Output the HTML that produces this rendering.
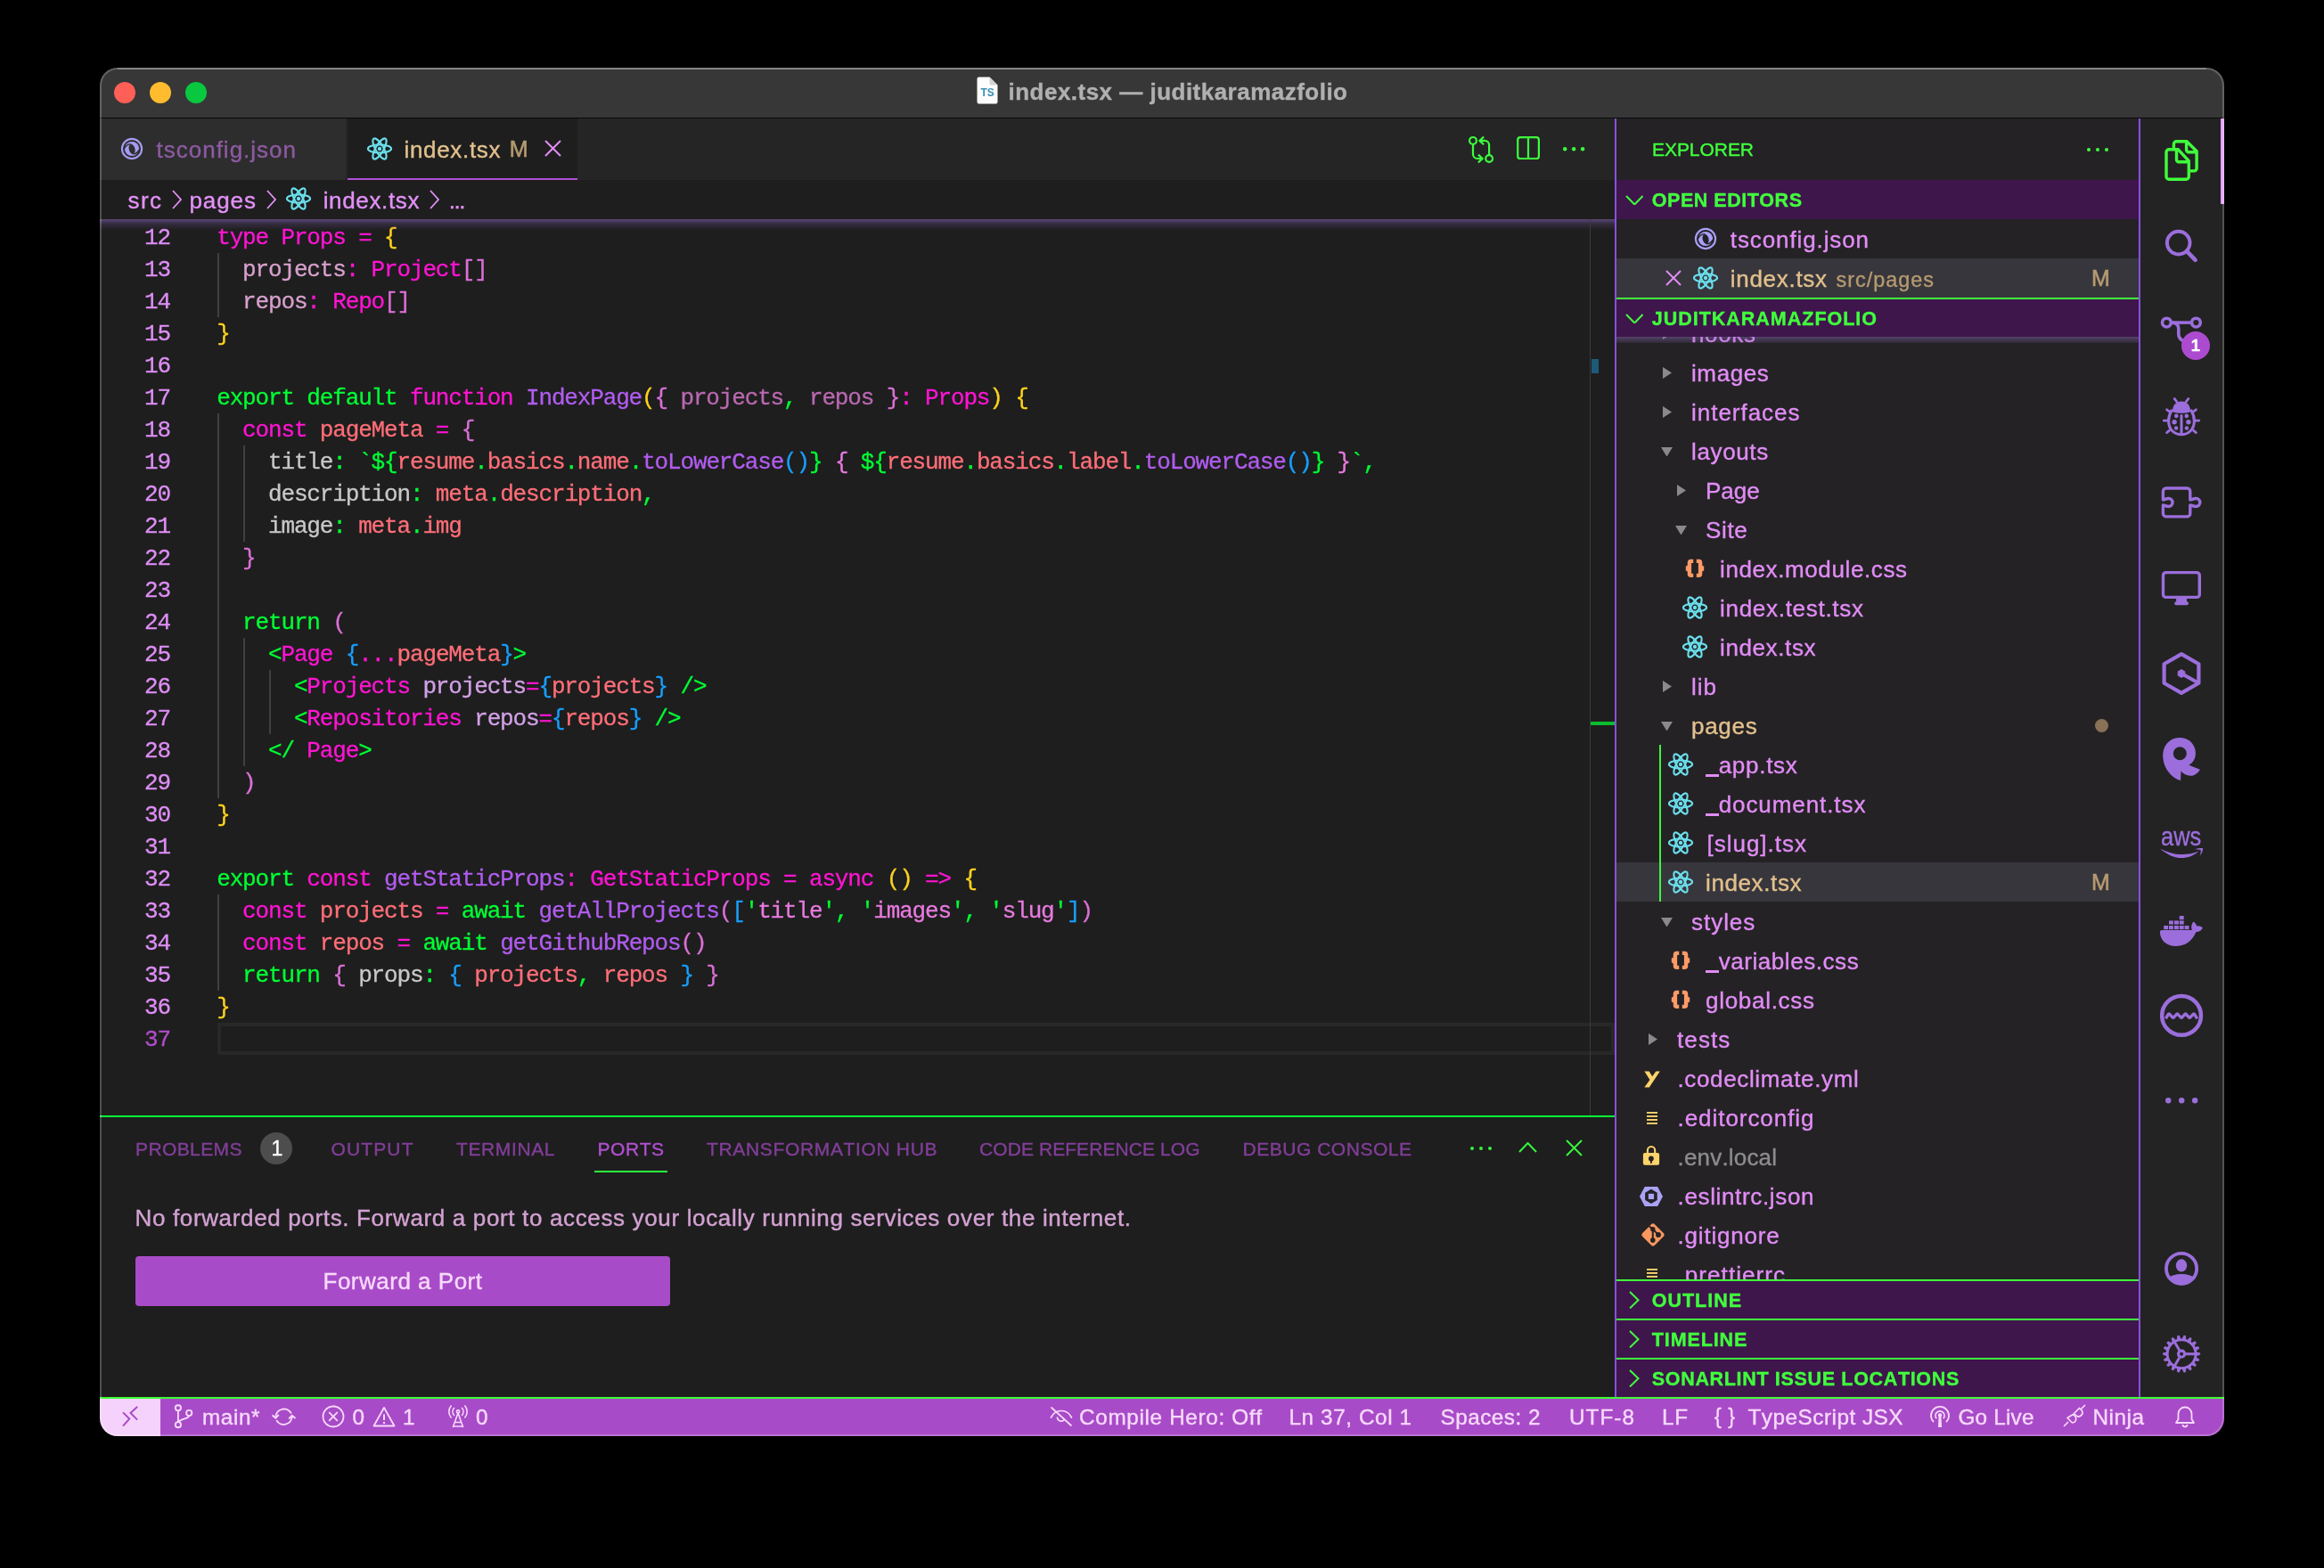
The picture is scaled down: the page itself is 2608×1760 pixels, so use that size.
<!DOCTYPE html>
<html><head><meta charset="utf-8"><title>index.tsx — juditkaramazfolio</title>
<style>
html,body{margin:0;padding:0;background:#000;width:2608px;height:1760px;}
body{position:relative;font-family:"Liberation Sans",sans-serif;font-kerning:none;-webkit-font-smoothing:antialiased;}
.a{position:absolute;display:block;}
.t{position:absolute;white-space:pre;display:block;-webkit-text-stroke:.38px;}
#win{will-change:transform;position:absolute;left:0;top:0;width:2608px;height:1760px;clip-path:inset(76px 112px 148px 112px round 20px);}

.ln{position:absolute;left:243.2px;height:36px;line-height:36px;font-family:"Liberation Mono",monospace;font-size:26px;letter-spacing:-1.152px;white-space:pre;-webkit-text-stroke:.3px;}
.no{position:absolute;left:112px;width:79.0px;text-align:right;height:36px;line-height:36px;font-family:"Liberation Mono",monospace;font-size:26px;letter-spacing:-1.152px;color:#de8ef6;-webkit-text-stroke:.3px;}
.cg{color:#00ff33}.cm{color:#ff14d2}.cp{color:#b15cf0}.cs{color:#ff6e78}.cw{color:#c8c8c8}.cy{color:#ffd21e}.co{color:#da70d6}.cb{color:#179fff}.cpa{color:#b968b0}.cat{color:#d2a0e6}.cst{color:#e87ae0}.cpr{color:#d7a0cd}
</style></head><body>
<div id="win">
<div class="a" style="left:112px;top:76px;width:2384px;height:1536px;background:#1e1e1e;"></div>
<div class="a" style="left:112px;top:76px;width:2384px;height:57px;background:#373737;"></div>
<div class="a" style="left:112px;top:132px;width:2384px;height:2px;background:#080808;"></div>
<div class="a" style="left:128px;top:92px;width:24px;height:24px;background:#fe5f57;border-radius:50%;"></div>
<div class="a" style="left:168px;top:92px;width:24px;height:24px;background:#febc2e;border-radius:50%;"></div>
<div class="a" style="left:208px;top:92px;width:24px;height:24px;background:#09c840;border-radius:50%;"></div>
<svg class="a" style="left:1096px;top:85.5px;" width="24" height="31" viewBox="0 0 24 31"><path d="M.5 2.500A2 2 0 0 1 2.500 .5H14.500L23.500 9.500V28.500A2 2 0 0 1 21.500 30.500H2.500A2 2 0 0 1 .5 28.500Z" fill="#fdfdfd"/><path d="M14.500 .5V7.500A2 2 0 0 0 16.500 9.500H23.500Z" fill="#d4d4d4"/><text x="4.600" y="22.400" font-family="Liberation Sans" font-weight="bold" font-size="12" fill="#3b8fb5" letter-spacing="-.2">TS</text></svg>
<span class="t " style="left:1131.50px;top:88.00px;font-size:26px;line-height:30px;color:#b0b0b0;font-weight:bold;letter-spacing:0.483px;">index.tsx — juditkaramazfolio</span>
<div class="a" style="left:112px;top:133px;width:1700px;height:69px;background:#252526;"></div>
<div class="a" style="left:112px;top:133px;width:276px;height:69px;background:#2d2d2d;"></div>
<div class="a" style="left:388px;top:133px;width:2px;height:69px;background:#252526;"></div>
<div class="a" style="left:390px;top:133px;width:258px;height:69px;background:#1e1e1e;"></div>
<div class="a" style="left:390px;top:199.5px;width:258px;height:2.5px;background:#b04fd6;"></div>
<svg class="a" style="left:134px;top:153px;" width="28" height="28" viewBox="0 0 28 28"><circle cx="14" cy="14" r="11.1" fill="none" stroke="#a59cf2" stroke-width="2.1"/><circle cx="14" cy="14" r="8.1" fill="#a59cf2"/><ellipse cx="14" cy="14.3" rx="3.4" ry="5.5" transform="rotate(-14 14 14)" fill="#2d2d2d"/><path d="M13.6 8.900C10.200 8.500 7.300 10.300 5.900 13.400M14.400 19.600C17.800 20 20.700 18.200 22.100 15.100" fill="none" stroke="#2d2d2d" stroke-width="1.4"/></svg>
<span class="t " style="left:175.50px;top:153.00px;font-size:26px;line-height:30px;color:#8c5aa0;letter-spacing:0.998px;">tsconfig.json</span>
<svg class="a" style="left:411.0px;top:153.0px;" width="30.0" height="28.0" viewBox="0 0 30 28"><g fill="none" stroke="#6be0ee" stroke-width="2.1"><ellipse cx="15" cy="14" rx="13.1" ry="4.5"/><ellipse cx="15" cy="14" rx="13.1" ry="4.5" transform="rotate(60 15 14)"/><ellipse cx="15" cy="14" rx="13.1" ry="4.5" transform="rotate(120 15 14)"/></g><circle cx="15" cy="14" r="2.2" fill="#6be0ee"/></svg>
<span class="t " style="left:453.50px;top:153.00px;font-size:26px;line-height:30px;color:#e2c08d;letter-spacing:0.675px;">index.tsx</span>
<span class="t " style="left:571.80px;top:153.00px;font-size:25px;line-height:28px;color:#b59a70;-webkit-text-stroke:.6px;">M</span>
<svg class="a" style="left:611.0px;top:157.0px;" width="19" height="19" viewBox="0 0 19 19"><path d="M1 1L18 18M18 1L1 18" stroke="#e08cf5" stroke-width="2.0" fill="none"/></svg>
<div class="a" style="left:112px;top:202px;width:1700px;height:44px;background:#1e1e1e;"></div>
<span class="t " style="left:143.50px;top:210.00px;font-size:26px;line-height:30px;color:#e391f7;letter-spacing:1.421px;">src</span>
<svg class="a" style="left:193.0px;top:212.5px;" width="11" height="22" viewBox="0 0 11 22"><path d="M1 1L10 11.0L1 21" stroke="#e391f7" stroke-width="1.8" fill="none" stroke-linejoin="miter"/></svg>
<span class="t " style="left:212.50px;top:210.00px;font-size:26px;line-height:30px;color:#e391f7;letter-spacing:0.915px;">pages</span>
<svg class="a" style="left:299.0px;top:212.5px;" width="11" height="22" viewBox="0 0 11 22"><path d="M1 1L10 11.0L1 21" stroke="#e391f7" stroke-width="1.8" fill="none" stroke-linejoin="miter"/></svg>
<svg class="a" style="left:320.0px;top:209.0px;" width="30.0" height="28.0" viewBox="0 0 30 28"><g fill="none" stroke="#6be0ee" stroke-width="2.1"><ellipse cx="15" cy="14" rx="13.1" ry="4.5"/><ellipse cx="15" cy="14" rx="13.1" ry="4.5" transform="rotate(60 15 14)"/><ellipse cx="15" cy="14" rx="13.1" ry="4.5" transform="rotate(120 15 14)"/></g><circle cx="15" cy="14" r="2.2" fill="#6be0ee"/></svg>
<span class="t " style="left:362.70px;top:210.00px;font-size:26px;line-height:30px;color:#e391f7;letter-spacing:0.650px;">index.tsx</span>
<svg class="a" style="left:482.0px;top:212.5px;" width="11" height="22" viewBox="0 0 11 22"><path d="M1 1L10 11.0L1 21" stroke="#e391f7" stroke-width="1.8" fill="none" stroke-linejoin="miter"/></svg>
<span class="t " style="left:503.80px;top:210.00px;font-size:26px;line-height:30px;color:#e391f7;letter-spacing:-1.485px;">...</span>
<div class="a" style="left:244px;top:1148px;width:1568px;height:36px;box-sizing:border-box;border:4px solid #282828;"></div>
<div class="a" style="left:244px;top:284px;width:2px;height:72px;background:#404040;"></div>
<div class="a" style="left:244px;top:464px;width:2px;height:432px;background:#404040;"></div>
<div class="a" style="left:273px;top:500px;width:2px;height:108px;background:#404040;"></div>
<div class="a" style="left:273px;top:716px;width:2px;height:144px;background:#404040;"></div>
<div class="a" style="left:302px;top:752px;width:2px;height:72px;background:#404040;"></div>
<div class="a" style="left:244px;top:1004px;width:2px;height:108px;background:#404040;"></div>
<div class="no" style="top:249.1px">12</div>
<div class="ln" style="top:249.1px"><span class="cm">type</span><span class="cm"> Props</span><span class="cm"> =</span><span class="cy"> {</span></div>
<div class="no" style="top:285.1px">13</div>
<div class="ln" style="top:285.1px"><span class="cpr">  projects</span><span class="cm">:</span><span class="cm"> Project</span><span class="co">[]</span></div>
<div class="no" style="top:321.1px">14</div>
<div class="ln" style="top:321.1px"><span class="cpr">  repos</span><span class="cm">:</span><span class="cm"> Repo</span><span class="co">[]</span></div>
<div class="no" style="top:357.1px">15</div>
<div class="ln" style="top:357.1px"><span class="cy">}</span></div>
<div class="no" style="top:393.1px">16</div>
<div class="no" style="top:429.1px">17</div>
<div class="ln" style="top:429.1px"><span class="cg">export default</span><span class="cm"> function</span><span class="cp"> IndexPage</span><span class="cy">(</span><span class="co">{</span><span class="cpa"> projects</span><span class="cg">,</span><span class="cpa"> repos</span><span class="co"> }</span><span class="cm">:</span><span class="cm"> Props</span><span class="cy">)</span><span class="cy"> {</span></div>
<div class="no" style="top:465.1px">18</div>
<div class="ln" style="top:465.1px"><span class="cm">  const</span><span class="cs"> pageMeta</span><span class="cm"> =</span><span class="co"> {</span></div>
<div class="no" style="top:501.1px">19</div>
<div class="ln" style="top:501.1px"><span class="cw">    title</span><span class="cg">:</span><span class="cg"> `${</span><span class="cs">resume</span><span class="cg">.</span><span class="cs">basics</span><span class="cg">.</span><span class="cs">name</span><span class="cg">.</span><span class="cp">toLowerCase</span><span class="cb">()</span><span class="cg">}</span><span class="cst"> { </span><span class="cg">${</span><span class="cs">resume</span><span class="cg">.</span><span class="cs">basics</span><span class="cg">.</span><span class="cs">label</span><span class="cg">.</span><span class="cp">toLowerCase</span><span class="cb">()</span><span class="cg">}</span><span class="cst"> }</span><span class="cg">`,</span></div>
<div class="no" style="top:537.1px">20</div>
<div class="ln" style="top:537.1px"><span class="cw">    description</span><span class="cg">:</span><span class="cs"> meta</span><span class="cg">.</span><span class="cs">description</span><span class="cg">,</span></div>
<div class="no" style="top:573.1px">21</div>
<div class="ln" style="top:573.1px"><span class="cw">    image</span><span class="cg">:</span><span class="cs"> meta</span><span class="cg">.</span><span class="cs">img</span></div>
<div class="no" style="top:609.1px">22</div>
<div class="ln" style="top:609.1px"><span class="co">  }</span></div>
<div class="no" style="top:645.1px">23</div>
<div class="no" style="top:681.1px">24</div>
<div class="ln" style="top:681.1px"><span class="cg">  return</span><span class="co"> (</span></div>
<div class="no" style="top:717.1px">25</div>
<div class="ln" style="top:717.1px"><span class="cg">    &lt;</span><span class="cm">Page</span><span class="cb"> {</span><span class="cm">...</span><span class="cs">pageMeta</span><span class="cb">}</span><span class="cg">&gt;</span></div>
<div class="no" style="top:753.1px">26</div>
<div class="ln" style="top:753.1px"><span class="cg">      &lt;</span><span class="cm">Projects</span><span class="cat"> projects</span><span class="cm">=</span><span class="cb">{</span><span class="cs">projects</span><span class="cb">}</span><span class="cg"> /&gt;</span></div>
<div class="no" style="top:789.1px">27</div>
<div class="ln" style="top:789.1px"><span class="cg">      &lt;</span><span class="cm">Repositories</span><span class="cat"> repos</span><span class="cm">=</span><span class="cb">{</span><span class="cs">repos</span><span class="cb">}</span><span class="cg"> /&gt;</span></div>
<div class="no" style="top:825.1px">28</div>
<div class="ln" style="top:825.1px"><span class="cg">    &lt;/</span><span class="cm"> Page</span><span class="cg">&gt;</span></div>
<div class="no" style="top:861.1px">29</div>
<div class="ln" style="top:861.1px"><span class="co">  )</span></div>
<div class="no" style="top:897.1px">30</div>
<div class="ln" style="top:897.1px"><span class="cy">}</span></div>
<div class="no" style="top:933.1px">31</div>
<div class="no" style="top:969.1px">32</div>
<div class="ln" style="top:969.1px"><span class="cg">export</span><span class="cm"> const</span><span class="cp"> getStaticProps</span><span class="cm">:</span><span class="cm"> GetStaticProps</span><span class="cm"> =</span><span class="cm"> async</span><span class="cy"> ()</span><span class="cm"> =&gt;</span><span class="cy"> {</span></div>
<div class="no" style="top:1005.1px">33</div>
<div class="ln" style="top:1005.1px"><span class="cm">  const</span><span class="cs"> projects</span><span class="cm"> =</span><span class="cg"> await</span><span class="cp"> getAllProjects</span><span class="co">(</span><span class="cb">[</span><span class="cg">&#x27;</span><span class="cst">title</span><span class="cg">&#x27;</span><span class="cg">,</span><span class="cg"> &#x27;</span><span class="cst">images</span><span class="cg">&#x27;</span><span class="cg">,</span><span class="cg"> &#x27;</span><span class="cst">slug</span><span class="cg">&#x27;</span><span class="cb">]</span><span class="co">)</span></div>
<div class="no" style="top:1041.1px">34</div>
<div class="ln" style="top:1041.1px"><span class="cm">  const</span><span class="cs"> repos</span><span class="cm"> =</span><span class="cg"> await</span><span class="cp"> getGithubRepos</span><span class="co">()</span></div>
<div class="no" style="top:1077.1px">35</div>
<div class="ln" style="top:1077.1px"><span class="cg">  return</span><span class="co"> {</span><span class="cw"> props</span><span class="cg">:</span><span class="cb"> {</span><span class="cs"> projects</span><span class="cg">,</span><span class="cs"> repos</span><span class="cb"> }</span><span class="co"> }</span></div>
<div class="no" style="top:1113.1px">36</div>
<div class="ln" style="top:1113.1px"><span class="cy">}</span></div>
<div class="no" style="top:1149.1px;color:#b04dca">37</div>
<div class="a" style="left:112px;top:246px;width:1700px;height:12px;background:linear-gradient(rgba(130,95,175,.6),rgba(100,75,135,.3) 45%,rgba(60,45,80,.06));"></div>
<div class="a" style="left:1784px;top:246px;width:1.3px;height:1006px;background:#3a3a3a;"></div>
<div class="a" style="left:1786px;top:403px;width:8px;height:16px;background:#1b5a78;"></div>
<div class="a" style="left:1785px;top:810px;width:27px;height:4px;background:#0bbd2f;"></div>
<div class="a" style="left:112px;top:1252px;width:1700px;height:316px;background:#1e1e1e;"></div>
<div class="a" style="left:112px;top:1252px;width:1700px;height:2px;background:#0aff36;"></div>
<span class="t " style="left:152.00px;top:1278.00px;font-size:21px;line-height:23px;color:#803e98;letter-spacing:0.400px;">PROBLEMS</span>
<div class="a" style="left:292px;top:1271px;width:36px;height:36px;background:#4d4d4d;border-radius:50%;"></div>
<span class="t " style="left:304.50px;top:1276.00px;font-size:23px;line-height:26px;color:#ffffff;">1</span>
<span class="t " style="left:371.50px;top:1278.00px;font-size:21px;line-height:23px;color:#803e98;letter-spacing:1.134px;">OUTPUT</span>
<span class="t " style="left:512.00px;top:1278.00px;font-size:21px;line-height:23px;color:#803e98;letter-spacing:0.617px;">TERMINAL</span>
<span class="t " style="left:670.50px;top:1278.00px;font-size:21px;line-height:23px;color:#b04fd0;letter-spacing:0.540px;">PORTS</span>
<div class="a" style="left:667px;top:1313.5px;width:82px;height:2.5px;background:#2aff3c;"></div>
<span class="t " style="left:793.00px;top:1278.00px;font-size:21px;line-height:23px;color:#803e98;letter-spacing:0.657px;">TRANSFORMATION HUB</span>
<span class="t " style="left:1099.00px;top:1278.00px;font-size:21px;line-height:23px;color:#803e98;letter-spacing:0.076px;">CODE REFERENCE LOG</span>
<span class="t " style="left:1394.50px;top:1278.00px;font-size:21px;line-height:23px;color:#803e98;letter-spacing:0.524px;">DEBUG CONSOLE</span>
<svg class="a" style="left:1649.0px;top:1286.0px;" width="26.0" height="6.0" viewBox="0 0 26.0 6.0"><circle cx="3.0" cy="3.0" r="2.0" fill="#35f53c"/><circle cx="13.0" cy="3.0" r="2.0" fill="#35f53c"/><circle cx="23.0" cy="3.0" r="2.0" fill="#35f53c"/></svg>
<svg class="a" style="left:1703.5px;top:1282.0px;" width="21" height="12" viewBox="0 0 21 12"><path d="M1 11L10.5 1L20 11" stroke="#35f53c" stroke-width="2.0" fill="none"/></svg>
<svg class="a" style="left:1756.5px;top:1278.5px;" width="19" height="19" viewBox="0 0 19 19"><path d="M1 1L18 18M18 1L1 18" stroke="#35f53c" stroke-width="2.0" fill="none"/></svg>
<span class="t " style="left:151.50px;top:1352.00px;font-size:26px;line-height:30px;color:#d3a1d2;letter-spacing:0.649px;">No forwarded ports. Forward a port to access your locally running services over the internet.</span>
<div class="a" style="left:152px;top:1410px;width:600px;height:56px;background:#a84bc8;border-radius:4px;"></div>
<span class="t " style="left:362.50px;top:1423.00px;font-size:26px;line-height:30px;color:#f7d9fb;letter-spacing:0.504px;">Forward a Port</span>
<div class="a" style="left:112px;top:1568px;width:2384px;height:44px;background:#a84bc8;"></div>
<div class="a" style="left:112px;top:1568px;width:2384px;height:2px;background:#3cff32;"></div>
<div class="a" style="left:112px;top:1570px;width:68px;height:42px;background:#f5d2fb;"></div>
<span class="t " style="left:227.00px;top:1577.00px;font-size:24.3px;line-height:27px;color:#f7d9fb;letter-spacing:0.593px;">main*</span>
<span class="t " style="left:395.50px;top:1577.00px;font-size:24.3px;line-height:27px;color:#f7d9fb;">0</span>
<span class="t " style="left:452.00px;top:1577.00px;font-size:24.3px;line-height:27px;color:#f7d9fb;">1</span>
<span class="t " style="left:534.00px;top:1577.00px;font-size:24.3px;line-height:27px;color:#f7d9fb;">0</span>
<span class="t " style="left:1211.00px;top:1577.00px;font-size:24.3px;line-height:27px;color:#f7d9fb;letter-spacing:0.659px;">Compile Hero: Off</span>
<span class="t " style="left:1446.50px;top:1577.00px;font-size:24.3px;line-height:27px;color:#f7d9fb;letter-spacing:0.587px;">Ln 37, Col 1</span>
<span class="t " style="left:1616.50px;top:1577.00px;font-size:24.3px;line-height:27px;color:#f7d9fb;letter-spacing:0.491px;">Spaces: 2</span>
<span class="t " style="left:1761.00px;top:1577.00px;font-size:24.3px;line-height:27px;color:#f7d9fb;letter-spacing:1.039px;">UTF-8</span>
<span class="t " style="left:1865.00px;top:1577.00px;font-size:24.3px;line-height:27px;color:#f7d9fb;letter-spacing:0.642px;">LF</span>
<span class="t " style="left:1961.50px;top:1577.00px;font-size:24.3px;line-height:27px;color:#f7d9fb;letter-spacing:0.504px;">TypeScript JSX</span>
<span class="t " style="left:2197.50px;top:1577.00px;font-size:24.3px;line-height:27px;color:#f7d9fb;letter-spacing:0.209px;">Go Live</span>
<span class="t " style="left:2348.50px;top:1577.00px;font-size:24.3px;line-height:27px;color:#f7d9fb;letter-spacing:0.531px;">Ninja</span>
<div class="a" style="left:1812px;top:133px;width:590px;height:1435px;background:#242225;"></div>
<div class="a" style="left:1812px;top:133px;width:2px;height:1435px;background:#8a4fe0;"></div>
<div class="a" style="left:2400px;top:133px;width:2px;height:1435px;background:#8a4fe0;"></div>
<span class="t " style="left:1854.00px;top:156.00px;font-size:21px;line-height:23px;color:#40ff3c;letter-spacing:-0.053px;">EXPLORER</span>
<svg class="a" style="left:2341.0px;top:164.5px;" width="26.0" height="6.0" viewBox="0 0 26.0 6.0"><circle cx="3.0" cy="3.0" r="2.0" fill="#40ff3c"/><circle cx="13.0" cy="3.0" r="2.0" fill="#40ff3c"/><circle cx="23.0" cy="3.0" r="2.0" fill="#40ff3c"/></svg>
<div class="a" style="left:1814px;top:202px;width:586px;height:44px;background:#3e164b;"></div>
<svg class="a" style="left:1823.75px;top:218.95px;" width="20.5" height="11.5" viewBox="0 0 20.5 11.5"><path d="M1 1L10.25 10.5L19.5 1" stroke="#40ff3c" stroke-width="2.0" fill="none"/></svg>
<span class="t " style="left:1853.80px;top:213.00px;font-size:21.5px;line-height:24px;color:#40ff3c;font-weight:bold;letter-spacing:0.521px;">OPEN EDITORS</span>
<svg class="a" style="left:1900px;top:254px;" width="28" height="28" viewBox="0 0 28 28"><circle cx="14" cy="14" r="11.1" fill="none" stroke="#aaa0fa" stroke-width="2.1"/><circle cx="14" cy="14" r="8.1" fill="#aaa0fa"/><ellipse cx="14" cy="14.3" rx="3.4" ry="5.5" transform="rotate(-14 14 14)" fill="#242225"/><path d="M13.6 8.900C10.200 8.500 7.300 10.300 5.900 13.400M14.400 19.600C17.800 20 20.700 18.200 22.100 15.100" fill="none" stroke="#242225" stroke-width="1.4"/></svg>
<span class="t " style="left:1941.80px;top:254.00px;font-size:26px;line-height:30px;color:#e18cf5;letter-spacing:0.890px;">tsconfig.json</span>
<div class="a" style="left:1814px;top:290px;width:586px;height:44px;background:#37363c;"></div>
<svg class="a" style="left:1869.0px;top:303.0px;" width="18" height="18" viewBox="0 0 18 18"><path d="M1 1L17 17M17 1L1 17" stroke="#e18cf5" stroke-width="2.0" fill="none"/></svg>
<svg class="a" style="left:1899.0px;top:298.0px;" width="30.0" height="28.0" viewBox="0 0 30 28"><g fill="none" stroke="#6be0ee" stroke-width="2.1"><ellipse cx="15" cy="14" rx="13.1" ry="4.5"/><ellipse cx="15" cy="14" rx="13.1" ry="4.5" transform="rotate(60 15 14)"/><ellipse cx="15" cy="14" rx="13.1" ry="4.5" transform="rotate(120 15 14)"/></g><circle cx="15" cy="14" r="2.2" fill="#6be0ee"/></svg>
<span class="t " style="left:1941.80px;top:298.00px;font-size:26px;line-height:30px;color:#e2c08d;letter-spacing:0.700px;">index.tsx</span>
<span class="t " style="left:2060.50px;top:301.00px;font-size:23.4px;line-height:26px;color:#b59a70;letter-spacing:1.006px;">src/pages</span>
<span class="t " style="left:2347.00px;top:298.00px;font-size:25px;line-height:28px;color:#b59a70;-webkit-text-stroke:.6px;">M</span>
<div class="a" style="left:1814px;top:334px;width:586px;height:2px;background:#40ff3c;"></div>
<div class="a" style="left:1814px;top:336px;width:586px;height:42px;background:#3e164b;"></div>
<svg class="a" style="left:1823.75px;top:351.95px;" width="20.5" height="11.5" viewBox="0 0 20.5 11.5"><path d="M1 1L10.25 10.5L19.5 1" stroke="#40ff3c" stroke-width="2.0" fill="none"/></svg>
<span class="t " style="left:1853.80px;top:346.00px;font-size:21.5px;line-height:24px;color:#40ff3c;font-weight:bold;letter-spacing:0.983px;">JUDITKARAMAZFOLIO</span>
<div class="a" style="left:1814px;top:378px;width:586px;height:1058px;overflow:hidden;">
<div class="a" style="left:-1814px;top:-378px;width:0;height:0;">
<span class="t " style="left:1898.00px;top:360.00px;font-size:26px;line-height:30px;color:#e18cf5;letter-spacing:0.655px;">hooks</span>
<svg class="a" style="left:1866px;top:367.5px;" width="10" height="13" viewBox="0 0 10 13"><path d="M0 0L10 6.5L0 13Z" fill="#8a8a8a"/></svg>
<span class="t " style="left:1898.00px;top:404.00px;font-size:26px;line-height:30px;color:#e18cf5;letter-spacing:0.597px;">images</span>
<svg class="a" style="left:1866px;top:411.5px;" width="10" height="13" viewBox="0 0 10 13"><path d="M0 0L10 6.5L0 13Z" fill="#8a8a8a"/></svg>
<span class="t " style="left:1898.00px;top:448.00px;font-size:26px;line-height:30px;color:#e18cf5;letter-spacing:0.975px;">interfaces</span>
<svg class="a" style="left:1866px;top:455.5px;" width="10" height="13" viewBox="0 0 10 13"><path d="M0 0L10 6.5L0 13Z" fill="#8a8a8a"/></svg>
<span class="t " style="left:1898.00px;top:492.00px;font-size:26px;line-height:30px;color:#e18cf5;letter-spacing:0.637px;">layouts</span>
<svg class="a" style="left:1863.8px;top:501.5px;" width="13" height="10.5" viewBox="0 0 13 10.5"><path d="M0 0L13 0L6.5 10.5Z" fill="#8a8a8a"/></svg>
<span class="t " style="left:1914.00px;top:536.00px;font-size:26px;line-height:30px;color:#e18cf5;letter-spacing:-0.007px;">Page</span>
<svg class="a" style="left:1882px;top:543.5px;" width="10" height="13" viewBox="0 0 10 13"><path d="M0 0L10 6.5L0 13Z" fill="#8a8a8a"/></svg>
<span class="t " style="left:1914.00px;top:580.00px;font-size:26px;line-height:30px;color:#e18cf5;letter-spacing:0.633px;">Site</span>
<svg class="a" style="left:1879.8px;top:589.5px;" width="13" height="10.5" viewBox="0 0 13 10.5"><path d="M0 0L13 0L6.5 10.5Z" fill="#8a8a8a"/></svg>
<span class="t " style="left:1930.00px;top:624.00px;font-size:26px;line-height:30px;color:#e18cf5;letter-spacing:0.608px;">index.module.css</span>
<svg class="a" style="left:1891px;top:627px;" width="22" height="22" viewBox="0 0 22 22"><path d="M9.200 .7H6.500Q2.750 .7 2.750 4.500V7Q2.750 8.500 .8 8.500V13.400Q2.750 13.400 2.750 15V17.300Q2.750 21.100 6.500 21.100H9.200V16.800H7.100V5.100H9.200Z" fill="#fd9a66"/><path d="M9.200 .7H6.500Q2.750 .7 2.750 4.500V7Q2.750 8.500 .8 8.500V13.400Q2.750 13.400 2.750 15V17.300Q2.750 21.100 6.500 21.100H9.200V16.800H7.100V5.100H9.200Z" fill="#fd9a66" transform="translate(22 0) scale(-1 1)"/></svg>
<span class="t " style="left:1930.00px;top:668.00px;font-size:26px;line-height:30px;color:#e18cf5;letter-spacing:0.713px;">index.test.tsx</span>
<svg class="a" style="left:1887.0px;top:668.0px;" width="30.0" height="28.0" viewBox="0 0 30 28"><g fill="none" stroke="#6be0ee" stroke-width="2.1"><ellipse cx="15" cy="14" rx="13.1" ry="4.5"/><ellipse cx="15" cy="14" rx="13.1" ry="4.5" transform="rotate(60 15 14)"/><ellipse cx="15" cy="14" rx="13.1" ry="4.5" transform="rotate(120 15 14)"/></g><circle cx="15" cy="14" r="2.2" fill="#6be0ee"/></svg>
<span class="t " style="left:1930.00px;top:712.00px;font-size:26px;line-height:30px;color:#e18cf5;letter-spacing:0.612px;">index.tsx</span>
<svg class="a" style="left:1887.0px;top:712.0px;" width="30.0" height="28.0" viewBox="0 0 30 28"><g fill="none" stroke="#6be0ee" stroke-width="2.1"><ellipse cx="15" cy="14" rx="13.1" ry="4.5"/><ellipse cx="15" cy="14" rx="13.1" ry="4.5" transform="rotate(60 15 14)"/><ellipse cx="15" cy="14" rx="13.1" ry="4.5" transform="rotate(120 15 14)"/></g><circle cx="15" cy="14" r="2.2" fill="#6be0ee"/></svg>
<span class="t " style="left:1898.00px;top:756.00px;font-size:26px;line-height:30px;color:#e18cf5;letter-spacing:0.994px;">lib</span>
<svg class="a" style="left:1866px;top:763.5px;" width="10" height="13" viewBox="0 0 10 13"><path d="M0 0L10 6.5L0 13Z" fill="#8a8a8a"/></svg>
<span class="t " style="left:1898.00px;top:800.00px;font-size:26px;line-height:30px;color:#e2c08d;letter-spacing:0.715px;">pages</span>
<svg class="a" style="left:1863.8px;top:809.5px;" width="13" height="10.5" viewBox="0 0 13 10.5"><path d="M0 0L13 0L6.5 10.5Z" fill="#8a8a8a"/></svg>
<div class="a" style="left:1914.2px;top:869px;width:15px;height:2.8px;background:#e18cf5;"></div>
<span class="t " style="left:1928.70px;top:844.00px;font-size:26px;line-height:30px;color:#e18cf5;letter-spacing:0.712px;">app.tsx</span>
<svg class="a" style="left:1871.0px;top:844.0px;" width="30.0" height="28.0" viewBox="0 0 30 28"><g fill="none" stroke="#6be0ee" stroke-width="2.1"><ellipse cx="15" cy="14" rx="13.1" ry="4.5"/><ellipse cx="15" cy="14" rx="13.1" ry="4.5" transform="rotate(60 15 14)"/><ellipse cx="15" cy="14" rx="13.1" ry="4.5" transform="rotate(120 15 14)"/></g><circle cx="15" cy="14" r="2.2" fill="#6be0ee"/></svg>
<div class="a" style="left:1914.2px;top:913px;width:15px;height:2.8px;background:#e18cf5;"></div>
<span class="t " style="left:1928.70px;top:888.00px;font-size:26px;line-height:30px;color:#e18cf5;letter-spacing:0.916px;">document.tsx</span>
<svg class="a" style="left:1871.0px;top:888.0px;" width="30.0" height="28.0" viewBox="0 0 30 28"><g fill="none" stroke="#6be0ee" stroke-width="2.1"><ellipse cx="15" cy="14" rx="13.1" ry="4.5"/><ellipse cx="15" cy="14" rx="13.1" ry="4.5" transform="rotate(60 15 14)"/><ellipse cx="15" cy="14" rx="13.1" ry="4.5" transform="rotate(120 15 14)"/></g><circle cx="15" cy="14" r="2.2" fill="#6be0ee"/></svg>
<span class="t " style="left:1915.50px;top:932.00px;font-size:26px;line-height:30px;color:#e18cf5;letter-spacing:0.990px;">[slug].tsx</span>
<svg class="a" style="left:1871.0px;top:932.0px;" width="30.0" height="28.0" viewBox="0 0 30 28"><g fill="none" stroke="#6be0ee" stroke-width="2.1"><ellipse cx="15" cy="14" rx="13.1" ry="4.5"/><ellipse cx="15" cy="14" rx="13.1" ry="4.5" transform="rotate(60 15 14)"/><ellipse cx="15" cy="14" rx="13.1" ry="4.5" transform="rotate(120 15 14)"/></g><circle cx="15" cy="14" r="2.2" fill="#6be0ee"/></svg>
<div class="a" style="left:1814px;top:968px;width:586px;height:44px;background:#37363c;"></div>
<span class="t " style="left:2347.00px;top:976.00px;font-size:25px;line-height:28px;color:#b59a70;-webkit-text-stroke:.6px;">M</span>
<span class="t " style="left:1914.00px;top:976.00px;font-size:26px;line-height:30px;color:#e2c08d;letter-spacing:0.612px;">index.tsx</span>
<svg class="a" style="left:1871.0px;top:976.0px;" width="30.0" height="28.0" viewBox="0 0 30 28"><g fill="none" stroke="#6be0ee" stroke-width="2.1"><ellipse cx="15" cy="14" rx="13.1" ry="4.5"/><ellipse cx="15" cy="14" rx="13.1" ry="4.5" transform="rotate(60 15 14)"/><ellipse cx="15" cy="14" rx="13.1" ry="4.5" transform="rotate(120 15 14)"/></g><circle cx="15" cy="14" r="2.2" fill="#6be0ee"/></svg>
<span class="t " style="left:1898.00px;top:1020.00px;font-size:26px;line-height:30px;color:#e18cf5;letter-spacing:0.968px;">styles</span>
<svg class="a" style="left:1863.8px;top:1029.5px;" width="13" height="10.5" viewBox="0 0 13 10.5"><path d="M0 0L13 0L6.5 10.5Z" fill="#8a8a8a"/></svg>
<div class="a" style="left:1914.2px;top:1089px;width:15px;height:2.8px;background:#e18cf5;"></div>
<span class="t " style="left:1928.70px;top:1064.00px;font-size:26px;line-height:30px;color:#e18cf5;letter-spacing:0.560px;">variables.css</span>
<svg class="a" style="left:1875px;top:1067px;" width="22" height="22" viewBox="0 0 22 22"><path d="M9.200 .7H6.500Q2.750 .7 2.750 4.500V7Q2.750 8.500 .8 8.500V13.400Q2.750 13.400 2.750 15V17.300Q2.750 21.100 6.500 21.100H9.200V16.800H7.100V5.100H9.200Z" fill="#fd9a66"/><path d="M9.200 .7H6.500Q2.750 .7 2.750 4.500V7Q2.750 8.500 .8 8.500V13.400Q2.750 13.400 2.750 15V17.300Q2.750 21.100 6.500 21.100H9.200V16.800H7.100V5.100H9.200Z" fill="#fd9a66" transform="translate(22 0) scale(-1 1)"/></svg>
<span class="t " style="left:1914.00px;top:1108.00px;font-size:26px;line-height:30px;color:#e18cf5;letter-spacing:0.709px;">global.css</span>
<svg class="a" style="left:1875px;top:1111px;" width="22" height="22" viewBox="0 0 22 22"><path d="M9.200 .7H6.500Q2.750 .7 2.750 4.500V7Q2.750 8.500 .8 8.500V13.400Q2.750 13.400 2.750 15V17.300Q2.750 21.100 6.500 21.100H9.200V16.800H7.100V5.100H9.200Z" fill="#fd9a66"/><path d="M9.200 .7H6.500Q2.750 .7 2.750 4.500V7Q2.750 8.500 .8 8.500V13.400Q2.750 13.400 2.750 15V17.300Q2.750 21.100 6.500 21.100H9.200V16.800H7.100V5.100H9.200Z" fill="#fd9a66" transform="translate(22 0) scale(-1 1)"/></svg>
<span class="t " style="left:1882.00px;top:1152.00px;font-size:26px;line-height:30px;color:#e18cf5;letter-spacing:1.098px;">tests</span>
<svg class="a" style="left:1850px;top:1159.5px;" width="10" height="13" viewBox="0 0 10 13"><path d="M0 0L10 6.5L0 13Z" fill="#8a8a8a"/></svg>
<span class="t " style="left:1882.50px;top:1196.00px;font-size:26px;line-height:30px;color:#e18cf5;letter-spacing:0.639px;">.codeclimate.yml</span>
<svg class="a" style="left:1845px;top:1201.6px;" width="19" height="19" viewBox="0 0 19 19"><path d="M13.300 .4H17.800L5.800 18.400H.4Z" fill="#fdd36b"/><path d="M.4 .4H5.600L10.600 8.600L8 12.600Z" fill="#fdd36b"/></svg>
<span class="t " style="left:1882.50px;top:1240.00px;font-size:26px;line-height:30px;color:#e18cf5;letter-spacing:0.947px;">.editorconfig</span>
<svg class="a" style="left:1847.8px;top:1248px;" width="12.4" height="16" viewBox="0 0 12.4 16"><rect x="0" y="0" width="12.200" height="1.900" fill="#fdd36b"/><rect x="0" y="4" width="12.200" height="1.900" fill="#fdd36b"/><rect x="0" y="8" width="12.200" height="1.900" fill="#fdd36b"/><rect x="0" y="12" width="12.200" height="1.900" fill="#fdd36b"/></svg>
<span class="t " style="left:1882.50px;top:1284.00px;font-size:26px;line-height:30px;color:#8c8c8c;letter-spacing:0.184px;">.env.local</span>
<svg class="a" style="left:1843px;top:1285px;" width="20" height="24" viewBox="0 0 20 24"><path d="M5.900 10V6.200a4.150 4.150 0 0 1 8.300 0V10" fill="none" stroke="#fdd36b" stroke-width="2.100"/><rect x=".9" y="9" width="18.200" height="13.800" rx="2" fill="#fdd36b"/><circle cx="9.900" cy="15.400" r="2.900" fill="#242225"/><rect x="8.900" y="16" width="2" height="4.700" fill="#242225"/></svg>
<span class="t " style="left:1882.50px;top:1328.00px;font-size:26px;line-height:30px;color:#e18cf5;letter-spacing:0.654px;">.eslintrc.json</span>
<svg class="a" style="left:1839px;top:1330px;" width="28" height="24" viewBox="0 0 28 24"><g transform="translate(13.950 12.950)"><path d="M-13 0L-7.200 -11H7.200L13 0L7.200 11H-7.200Z" fill="#aaa2f5"/><path d="M0 -8.100L6.800 -4.100V4.100L0 8.100L-6.800 4.100V-4.100Z" fill="#242225"/><rect x="-3.100" y="-3.100" width="6.200" height="6.200" fill="#aaa2f5"/></g></svg>
<span class="t " style="left:1882.50px;top:1372.00px;font-size:26px;line-height:30px;color:#e18cf5;letter-spacing:0.816px;">.gitignore</span>
<svg class="a" style="left:1841px;top:1372px;" width="28" height="28" viewBox="0 0 28 28"><g transform="translate(14 14)"><rect x="-8.900" y="-8.900" width="17.800" height="17.800" rx="2" transform="rotate(45)" fill="#f8975f" stroke="#f8975f" stroke-width="1.500" stroke-linejoin="round"/><g stroke="#242225" stroke-width="2" fill="#242225"><path d="M-4.200 -9.500L-.2 -6.300V6.100M-.2 -6.300L6 -.1" fill="none"/><circle cx="-.2" cy="-6.300" r="1.700"/><circle cx="6" cy="-.1" r="2"/><circle cx="-.2" cy="6.100" r="1.800"/></g></g></svg>
<span class="t " style="left:1882.50px;top:1416.00px;font-size:26px;line-height:30px;color:#e18cf5;letter-spacing:1.070px;">.prettierrc</span>
<svg class="a" style="left:1847.8px;top:1424px;" width="12.4" height="16" viewBox="0 0 12.4 16"><rect x="0" y="0" width="12.200" height="1.900" fill="#fdd36b"/><rect x="0" y="4" width="12.200" height="1.900" fill="#fdd36b"/><rect x="0" y="8" width="12.200" height="1.900" fill="#fdd36b"/><rect x="0" y="12" width="12.200" height="1.900" fill="#fdd36b"/></svg>
<div class="a" style="left:2350.5px;top:806.5px;width:15px;height:15px;background:#8a7156;border-radius:50%;"></div>
<div class="a" style="left:1862px;top:836px;width:2px;height:176px;background:#3df53c;"></div>
</div></div>
<div class="a" style="left:1814px;top:378px;width:586px;height:6.5px;background:linear-gradient(rgba(150,110,200,.42),rgba(110,85,150,.16));"></div>
<div class="a" style="left:1814px;top:1436px;width:586px;height:2px;background:#40ff3c;"></div>
<div class="a" style="left:1814px;top:1438px;width:586px;height:42px;background:#3e164b;"></div>
<svg class="a" style="left:1828.45px;top:1448.75px;" width="11.5" height="20.5" viewBox="0 0 11.5 20.5"><path d="M1 1L10.5 10.25L1 19.5" stroke="#40ff3c" stroke-width="2.0" fill="none" stroke-linejoin="miter"/></svg>
<span class="t " style="left:1853.80px;top:1448.00px;font-size:21.5px;line-height:24px;color:#40ff3c;font-weight:bold;letter-spacing:0.974px;">OUTLINE</span>
<div class="a" style="left:1814px;top:1480px;width:586px;height:2px;background:#40ff3c;"></div>
<div class="a" style="left:1814px;top:1482px;width:586px;height:42px;background:#3e164b;"></div>
<svg class="a" style="left:1828.45px;top:1492.75px;" width="11.5" height="20.5" viewBox="0 0 11.5 20.5"><path d="M1 1L10.5 10.25L1 19.5" stroke="#40ff3c" stroke-width="2.0" fill="none" stroke-linejoin="miter"/></svg>
<span class="t " style="left:1853.80px;top:1492.00px;font-size:21.5px;line-height:24px;color:#40ff3c;font-weight:bold;letter-spacing:0.881px;">TIMELINE</span>
<div class="a" style="left:1814px;top:1524px;width:586px;height:2px;background:#40ff3c;"></div>
<div class="a" style="left:1814px;top:1526px;width:586px;height:42px;background:#3e164b;"></div>
<svg class="a" style="left:1828.45px;top:1536.75px;" width="11.5" height="20.5" viewBox="0 0 11.5 20.5"><path d="M1 1L10.5 10.25L1 19.5" stroke="#40ff3c" stroke-width="2.0" fill="none" stroke-linejoin="miter"/></svg>
<span class="t " style="left:1853.80px;top:1536.00px;font-size:21.5px;line-height:24px;color:#40ff3c;font-weight:bold;letter-spacing:0.667px;">SONARLINT ISSUE LOCATIONS</span>
<div class="a" style="left:2402px;top:133px;width:94px;height:1435px;background:#232323;"></div>
<div class="a" style="left:2492px;top:133px;width:4px;height:96px;background:#e5a0ff;"></div>
<svg class="a" style="left:2418px;top:150px;" width="60" height="60" viewBox="0 0 60 60"><g fill="none" stroke="#40ff3c" stroke-width="3.4" stroke-linejoin="round"><path d="M16 17.800H26.400L38.300 30.600V48.300a3 3 0 0 1-3 3H16a3 3 0 0 1-3-3V20.800a3 3 0 0 1 3-3Z"/><path d="M24.500 17.800V29.300a2.500 2.500 0 0 0 2.500 2.500H38.300"/><path d="M21.400 17.800V11.800a3 3 0 0 1 3-3H36L47.100 19.700V38.900a3 3 0 0 1-3 3H38.300"/><path d="M35.600 8.800V18.200a2.500 2.500 0 0 0 2.500 2.500H47.100"/></g></svg>
<svg class="a" style="left:2418px;top:246px;" width="60" height="60" viewBox="0 0 60 60"><g fill="none" stroke="#9b6edc"><circle cx="26.700" cy="26.600" r="12.800" stroke-width="4"/><path d="M36.200 36.200L45.600 45.800" stroke-width="4.600" stroke-linecap="round"/></g></svg>
<svg class="a" style="left:2418px;top:342px;" width="70" height="70" viewBox="0 0 70 70"><g fill="none" stroke="#9b6edc" stroke-width="3.600"><circle cx="13.400" cy="20.100" r="4.900"/><circle cx="46.400" cy="20.100" r="4.900"/><path d="M18.300 20.100H41.500"/><path d="M20 20.100C24.500 20.300 26.800 23 26.800 27V33C26.800 37 29 39.200 32.500 40.800"/></g></svg>
<div class="a" style="left:2448px;top:372px;width:32px;height:32px;background:#ac4bcf;border-radius:50%;"></div>
<span class="t " style="left:2458.80px;top:377.00px;font-size:18.5px;line-height:21px;color:#ffffff;font-weight:bold;">1</span>
<svg class="a" style="left:2418px;top:438px;" width="60" height="60" viewBox="0 0 60 60"><g fill="none" stroke="#9b6edc" stroke-linecap="round"><path d="M18.800 23C16.500 27 15.500 31 15.600 35C15.800 44 22 49.800 30 49.800C38 49.800 44.200 44 44.400 35C44.500 31 43.500 27 41.200 23" stroke-width="3.100"/><path d="M30 28.500V48" stroke-width="3"/><g stroke-width="2.800"><path d="M24.900 13L22.200 9.600M35.100 13L37.800 9.600"/><path d="M17.200 24.500L13.600 21.800M42.800 24.500L46.400 21.800M14.500 34.100H10.200M45.500 34.100H49.800M16.500 45.200L13.600 47.600M43.500 45.200L46.400 47.600"/></g></g><path d="M19.900 24.200C19.900 17 24 12.600 30 12.600C36 12.600 40.100 17 40.100 24.200C37 25.300 33.500 25.700 30 25.700C26.500 25.700 23 25.300 19.900 24.200Z" fill="#9b6edc"/><g fill="#9b6edc"><circle cx="24.300" cy="28.900" r="2.300"/><circle cx="35.800" cy="28.900" r="2.300"/><circle cx="22.100" cy="35.800" r="2.700"/><circle cx="37.900" cy="35.800" r="2.700"/><circle cx="24.100" cy="42.500" r="2.200"/><circle cx="35.900" cy="42.500" r="2.200"/></g></svg>
<svg class="a" style="left:2418px;top:534px;" width="60" height="60" viewBox="0 0 60 60"><path d="M9.400 27V17.500a3.500 3.500 0 0 1 3.500-3.500H36.300a3.500 3.500 0 0 1 3.500 3.500V27C42 27 43 25.500 46.300 25.500A4.500 4.500 0 0 1 46.300 34.500C43 34.500 42 33 39.800 33V42.400a3.500 3.500 0 0 1-3.500 3.500H12.900a3.500 3.500 0 0 1-3.500-3.500V33C11.600 33 12.200 34.500 15.500 34.500A4.500 4.500 0 0 0 15.500 25.500C12.200 25.500 11.600 27 9.400 27Z" fill="none" stroke="#9b6edc" stroke-width="3.400" stroke-linejoin="round"/></svg>
<svg class="a" style="left:2418px;top:630px;" width="60" height="60" viewBox="0 0 60 60"><rect x="9.500" y="12.600" width="40.800" height="27.800" rx="3.200" fill="none" stroke="#9b6edc" stroke-width="3.400"/><path d="M24.100 41H36V45.200C37.500 45.300 38 46 38 47.200S37 49.200 36 49.200H24.200C23 49.200 22.200 48.400 22.200 47.200S23 45.300 24.100 45.200Z" fill="#9b6edc"/></svg>
<svg class="a" style="left:2418px;top:726px;" width="60" height="60" viewBox="0 0 60 60"><path d="M30 8.100L49.400 19.200V40.800L30 51.900L10.600 40.800V19.200Z" fill="none" stroke="#9b6edc" stroke-width="4.200" stroke-linejoin="round"/><path d="M30 25.600L33.800 27.800V32.200L30 34.400L26.200 32.200V27.800Z" fill="#9b6edc" stroke="#9b6edc" stroke-width="1" stroke-linejoin="round"/><path d="M30 30L48.500 40.200" stroke="#9b6edc" stroke-width="4"/></svg>
<svg class="a" style="left:2418px;top:822px;" width="60" height="60" viewBox="0 0 60 60"><path fill-rule="evenodd" d="M28.300 5.900C38.500 5.900 45.900 13.500 45.900 23.700C45.900 29.500 43 34 38.300 36.700L50.900 41.700C48 46.500 44.500 48.800 40.200 48.800C35.500 48.800 32 46.500 29.500 43.600L29.100 54C19 51.500 9.200 40 9.200 26C9.200 14 17.500 5.900 28.300 5.900ZM28.300 16.200A7.500 7.500 0 1 0 28.300 31.200A7.500 7.500 0 1 0 28.300 16.200Z" fill="#9b6edc"/></svg>
<span class="t " style="left:2424.60px;top:922.00px;font-size:29.5px;line-height:33px;color:#9b6edc;transform:scaleX(.862);transform-origin:0 0;">aws</span>
<svg class="a" style="left:2413px;top:918px;" width="70" height="70" viewBox="0 0 70 70"><path d="M10.900 34.400C20 42 28 45 34.800 45C42 45 49 42.500 54.500 37.500C49 40 42 41 34.800 41C27 41 19 38.500 10.900 34.400Z" fill="#9b6edc"/><path d="M50 35.300C53 34.200 56 33.800 59.200 34.200C59 37.500 57.500 40.500 55.400 42.900C56.300 40.500 57 38.500 56.800 36.200C54.500 35.500 52 35.600 50 35.300Z" fill="#9b6edc"/></svg>
<svg class="a" style="left:2413px;top:1010px;" width="70" height="70" viewBox="0 0 70 70"><g fill="#9b6edc"><rect x="15.2" y="29" width="4.900" height="4.200"/><rect x="21" y="29" width="4.900" height="4.200"/><rect x="27" y="29" width="4.900" height="4.200"/><rect x="32.8" y="29" width="4.900" height="4.200"/><rect x="38.6" y="29" width="4.900" height="4.200"/><rect x="21" y="23.4" width="4.900" height="4.200"/><rect x="27" y="23.4" width="4.900" height="4.200"/><rect x="32.8" y="23.4" width="4.900" height="4.200"/><rect x="32.8" y="18" width="4.900" height="4.200"/><path d="M10.900 36Q10.900 33.900 13 33.900H46.900C45.500 31 46.500 27 48.400 24.600C50.500 25.800 51.800 27.500 52 29.500C54.500 29 57 29.800 58.900 31.500C57.500 34.500 54.500 36 51.300 36.200C47 47 38 52 28.600 52C18 52 10.900 45 10.900 36Z"/></g></svg>
<svg class="a" style="left:2413px;top:1105px;" width="70" height="70" viewBox="0 0 70 70"><circle cx="35.050" cy="34.900" r="21.900" fill="none" stroke="#9b6edc" stroke-width="4.500"/><path d="M17.400 38.400L20 33.800Q21 32.300 22 33.800L24.700 36.600Q25.700 37.800 26.700 36.600L29.400 33.800Q30.400 32.300 31.400 33.800L34 36.600Q35 37.800 36 36.600L38.500 33.800Q39.500 32.300 40.500 33.800L43.200 36.600Q44.200 37.800 45.200 36.600L47.900 33.800Q48.900 32.300 49.900 33.800L52.700 38.400" fill="none" stroke="#9b6edc" stroke-width="3.400" stroke-linejoin="round"/></svg>
<svg class="a" style="left:2428.8px;top:1231.3999999999999px;" width="38.4" height="8.4" viewBox="0 0 38.4 8.4"><circle cx="4.2" cy="4.2" r="3.2" fill="#9b6edc"/><circle cx="19.2" cy="4.2" r="3.2" fill="#9b6edc"/><circle cx="34.2" cy="4.2" r="3.2" fill="#9b6edc"/></svg>
<svg class="a" style="left:2413px;top:1390px;" width="70" height="70" viewBox="0 0 70 70"><defs><clipPath id="acl"><circle cx="35.050" cy="33.900" r="17.500"/></clipPath></defs><circle cx="35.050" cy="33.900" r="17.100" fill="none" stroke="#9b6edc" stroke-width="3.800"/><ellipse cx="35" cy="30.400" rx="6.200" ry="7.100" fill="#9b6edc"/><path d="M15 60V47C21 42.500 28 40 35 40C42 40 49 42.500 55 47V60Z" fill="#9b6edc" clip-path="url(#acl)"/></svg>
<svg class="a" style="left:2413px;top:1485px;" width="70" height="70" viewBox="0 0 70 70"><path d="M33.100 18.600L34.200 14.100H36L37.100 18.600Z" fill="#9b6edc" stroke="#9b6edc" stroke-width=".8" stroke-linejoin="round" transform="rotate(10 35.100 34.700)"/><path d="M33.100 18.600L34.200 14.100H36L37.100 18.600Z" fill="#9b6edc" stroke="#9b6edc" stroke-width=".8" stroke-linejoin="round" transform="rotate(30 35.100 34.700)"/><path d="M33.100 18.600L34.200 14.100H36L37.100 18.600Z" fill="#9b6edc" stroke="#9b6edc" stroke-width=".8" stroke-linejoin="round" transform="rotate(50 35.100 34.700)"/><path d="M33.100 18.600L34.200 14.100H36L37.100 18.600Z" fill="#9b6edc" stroke="#9b6edc" stroke-width=".8" stroke-linejoin="round" transform="rotate(70 35.100 34.700)"/><path d="M33.100 18.600L34.200 14.100H36L37.100 18.600Z" fill="#9b6edc" stroke="#9b6edc" stroke-width=".8" stroke-linejoin="round" transform="rotate(90 35.100 34.700)"/><path d="M33.100 18.600L34.200 14.100H36L37.100 18.600Z" fill="#9b6edc" stroke="#9b6edc" stroke-width=".8" stroke-linejoin="round" transform="rotate(110 35.100 34.700)"/><path d="M33.100 18.600L34.200 14.100H36L37.100 18.600Z" fill="#9b6edc" stroke="#9b6edc" stroke-width=".8" stroke-linejoin="round" transform="rotate(130 35.100 34.700)"/><path d="M33.100 18.600L34.200 14.100H36L37.100 18.600Z" fill="#9b6edc" stroke="#9b6edc" stroke-width=".8" stroke-linejoin="round" transform="rotate(150 35.100 34.700)"/><path d="M33.100 18.600L34.200 14.100H36L37.100 18.600Z" fill="#9b6edc" stroke="#9b6edc" stroke-width=".8" stroke-linejoin="round" transform="rotate(170 35.100 34.700)"/><path d="M33.100 18.600L34.200 14.100H36L37.100 18.600Z" fill="#9b6edc" stroke="#9b6edc" stroke-width=".8" stroke-linejoin="round" transform="rotate(190 35.100 34.700)"/><path d="M33.100 18.600L34.200 14.100H36L37.100 18.600Z" fill="#9b6edc" stroke="#9b6edc" stroke-width=".8" stroke-linejoin="round" transform="rotate(210 35.100 34.700)"/><path d="M33.100 18.600L34.200 14.100H36L37.100 18.600Z" fill="#9b6edc" stroke="#9b6edc" stroke-width=".8" stroke-linejoin="round" transform="rotate(230 35.100 34.700)"/><path d="M33.100 18.600L34.200 14.100H36L37.100 18.600Z" fill="#9b6edc" stroke="#9b6edc" stroke-width=".8" stroke-linejoin="round" transform="rotate(250 35.100 34.700)"/><path d="M33.100 18.600L34.200 14.100H36L37.100 18.600Z" fill="#9b6edc" stroke="#9b6edc" stroke-width=".8" stroke-linejoin="round" transform="rotate(270 35.100 34.700)"/><path d="M33.100 18.600L34.200 14.100H36L37.100 18.600Z" fill="#9b6edc" stroke="#9b6edc" stroke-width=".8" stroke-linejoin="round" transform="rotate(290 35.100 34.700)"/><path d="M33.100 18.600L34.200 14.100H36L37.100 18.600Z" fill="#9b6edc" stroke="#9b6edc" stroke-width=".8" stroke-linejoin="round" transform="rotate(310 35.100 34.700)"/><path d="M33.100 18.600L34.200 14.100H36L37.100 18.600Z" fill="#9b6edc" stroke="#9b6edc" stroke-width=".8" stroke-linejoin="round" transform="rotate(330 35.100 34.700)"/><path d="M33.100 18.600L34.200 14.100H36L37.100 18.600Z" fill="#9b6edc" stroke="#9b6edc" stroke-width=".8" stroke-linejoin="round" transform="rotate(350 35.100 34.700)"/><g fill="none" stroke="#9b6edc"><circle cx="35.100" cy="34.700" r="15.900" stroke-width="2.800"/><circle cx="35.100" cy="34.700" r="3.550" stroke-width="3.100"/><path d="M39.500 34.700H50.500M32.800 30.700L27.300 21.200M32.800 38.700L27.300 48.200" stroke-width="2.900"/></g></svg>
<svg class="a" style="left:1646px;top:151px;" width="32" height="34" viewBox="0 0 32 34"><g fill="none" stroke="#3cff3c" stroke-width="2.200"><circle cx="7" cy="6.900" r="3.900"/><circle cx="25.100" cy="27" r="3.900"/><path d="M7 10.800V22a5 5 0 0 0 5 5H17.400M12.900 22.600L17.600 27L12.900 31.400"/><path d="M25.100 23.100V11.900a5 5 0 0 0-5-5H14.600M19.100 2.500L14.400 6.900L19.100 11.300"/></g></svg>
<svg class="a" style="left:1701px;top:152px;" width="28" height="28" viewBox="0 0 28 28"><g fill="none" stroke="#3cff3c" stroke-width="2.200"><rect x="2.200" y="2.100" width="23.700" height="23.900" rx="2.800"/><path d="M14 2.100V26"/></g></svg>
<svg class="a" style="left:1752.75px;top:163.9px;" width="26.299999999999997" height="6.4" viewBox="0 0 26.299999999999997 6.4"><circle cx="3.2" cy="3.2" r="2.2" fill="#3cff3c"/><circle cx="13.149999999999999" cy="3.2" r="2.2" fill="#3cff3c"/><circle cx="23.099999999999998" cy="3.2" r="2.2" fill="#3cff3c"/></svg>
<svg class="a" style="left:134px;top:1576px;" width="26" height="30" viewBox="0 0 26 30"><path d="M4 9.400L11.200 16.600L4 24.600M20.100 3L12.500 10L20.100 17.600" fill="none" stroke="#a849c9" stroke-width="2"/></svg>
<svg class="a" style="left:194px;top:1575px;" width="24" height="32" viewBox="0 0 24 32"><g fill="none" stroke="#f7d9fb" stroke-width="1.900"><circle cx="5.900" cy="5.300" r="3.100"/><circle cx="5.900" cy="24.200" r="3.100"/><circle cx="18.200" cy="11" r="3.100"/><path d="M5.900 8.400V21.100M18.200 14.100C18.200 18 10 16.500 6.500 20.800"/></g></svg>
<svg class="a" style="left:303px;top:1577px;" width="32" height="28" viewBox="0 0 32 28"><g fill="none" stroke="#f7d9fb" stroke-width="1.900"><path d="M6.300 13.500A9.300 9.300 0 0 1 23.800 9.500M24.700 13A9.300 9.300 0 0 1 7.200 17"/><path d="M2.500 11.500L6.300 14.800L9.800 11M28.500 15L24.700 11.700L21.200 15.500"/></g></svg>
<svg class="a" style="left:361px;top:1577px;" width="26" height="26" viewBox="0 0 26 26"><g fill="none" stroke="#f7d9fb" stroke-width="1.800"><circle cx="13" cy="13" r="11.500"/><path d="M8.200 8.200L17.800 17.800M17.800 8.200L8.200 17.800"/></g></svg>
<svg class="a" style="left:418px;top:1578px;" width="26" height="24" viewBox="0 0 26 24"><path d="M13 2L24.500 22.500H1.500Z" fill="none" stroke="#f7d9fb" stroke-width="1.800" stroke-linejoin="round"/><path d="M13 9.500V16" stroke="#f7d9fb" stroke-width="2"/><circle cx="13" cy="19" r="1.200" fill="#f7d9fb"/></svg>
<svg class="a" style="left:501px;top:1577px;" width="26" height="26" viewBox="0 0 26 26"><g fill="none" stroke="#f7d9fb" stroke-width="1.600" stroke-linecap="round"><path d="M13 9L7.500 24.500M13 9L18.500 24.500M9.500 19.500H16.500M8 24H18"/><circle cx="13" cy="7.500" r="1.600"/><path d="M8.500 3.500A6 6 0 0 0 8.500 11.500M17.500 3.500A6 6 0 0 1 17.500 11.500M5.200 1A10 10 0 0 0 5.200 14M20.800 1A10 10 0 0 1 20.800 14"/></g></svg>
<svg class="a" style="left:1178px;top:1578px;" width="26" height="24" viewBox="0 0 26 24"><g fill="none" stroke="#f7d9fb" stroke-width="1.700" stroke-linecap="round"><path d="M2 2L24 22"/><path d="M1.500 13C4 8 8 5.500 13 5.500S22 8 24.500 13"/><path d="M8.500 13A4.500 4.500 0 0 0 16.500 15.500"/></g></svg>
<span class="t " style="left:1924.00px;top:1577.00px;font-size:23px;line-height:26px;color:#f7d9fb;letter-spacing:7.637px;">{}</span>
<svg class="a" style="left:2165px;top:1577px;" width="24" height="27" viewBox="0 0 24 27"><g fill="none" stroke="#f7d9fb" stroke-width="1.800"><path d="M5 19A10 10 0 1 1 19 19"/><path d="M8.200 15.200A5 5 0 1 1 15.800 15.200"/></g><circle cx="12" cy="11.500" r="2.200" fill="#f7d9fb"/><path d="M10.600 13H13.400L14 25H10Z" fill="#f7d9fb"/></svg>
<svg class="a" style="left:2315px;top:1576px;" width="26" height="26" viewBox="0 0 26 26"><g fill="none" stroke="#f7d9fb" stroke-width="1.700" stroke-linecap="round"><path d="M1.500 24.500L5.500 20.500"/><path d="M5 15.500L10.500 21A4.500 4.500 0 0 0 14 14L11.500 11.500Z" stroke-linejoin="round"/><path d="M12.500 10.500L15.500 13.500A4.500 4.500 0 0 0 21.500 7.500L18.500 4.500Z" stroke-linejoin="round"/><path d="M21 5L24.500 1.500"/></g></svg>
<svg class="a" style="left:2440px;top:1577px;" width="24" height="26" viewBox="0 0 24 26"><g fill="none" stroke="#f7d9fb" stroke-width="1.800" stroke-linejoin="round"><path d="M2 20H22L19.500 16V10A7.500 7.500 0 0 0 4.500 10V16Z"/><path d="M9.500 22A2.500 2.500 0 0 0 14.500 22"/></g></svg>
</div>
<div class="a" style="left:132px;top:76px;width:2344px;height:1.5px;background:rgba(255,255,255,.22);"></div><div class="a" style="left:112px;top:76px;width:2384px;height:1536px;box-sizing:border-box;border-radius:20px;border:2px solid rgba(255,255,255,.22);pointer-events:none;"></div>
</body></html>
